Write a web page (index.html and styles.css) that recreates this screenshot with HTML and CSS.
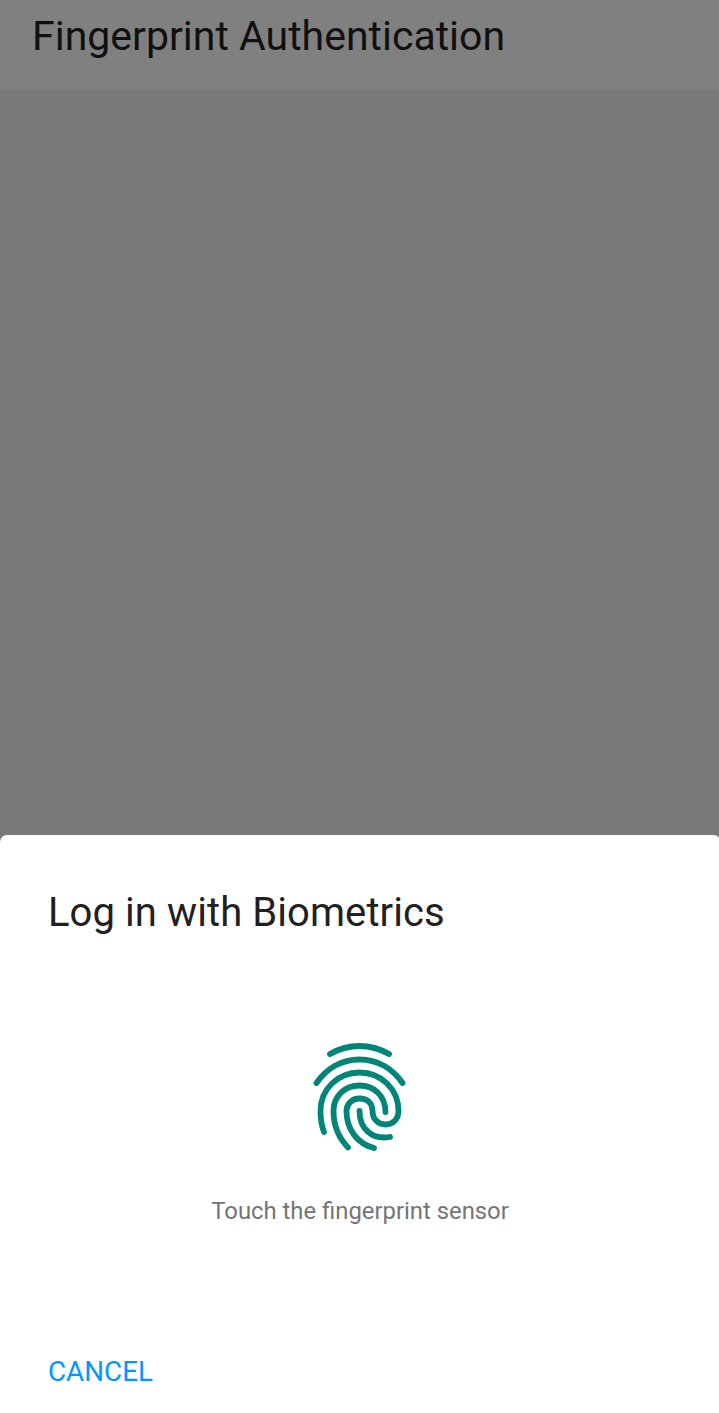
FILE: index.html
```html
<!DOCTYPE html>
<html lang="en">
<head>
<meta charset="utf-8">
<title>Fingerprint Authentication</title>
<link rel="stylesheet" href="styles.css">
</head>
<body>
<div class="screen">
  <header class="app-bar"><h1 class="app-title">Fingerprint Authentication</h1></header>
  <main class="backdrop"></main>
  <section class="sheet" role="dialog" aria-labelledby="sheet-title">
    <h2 class="sheet-title" id="sheet-title">Log in with Biometrics</h2>
    <div class="prompt">
      <svg class="fingerprint" viewBox="300 1030 120 135" aria-hidden="true">
        <path d="M330 1054Q344 1046 359.500 1046T389 1054"/>
        <path d="M316.500 1083C326 1069 341 1059.500 359.500 1059.500S393 1069 402.500 1083"/>
        <path d="M324 1132C321 1124 320.500 1118 320.500 1111C320.500 1089 338 1072.500 359.500 1072.500S398.500 1089 398.500 1111C398.500 1119 393 1124.500 385.500 1124.500S372.500 1119 372.500 1111S367 1098.500 359.500 1098.500S346.500 1104 346.500 1111C346.500 1130 358 1144 374 1148"/>
        <path d="M348 1147.500C338 1137 333.500 1126 333.500 1111C333.500 1096 345 1085.500 359.500 1085.500S385.500 1096 385.500 1112"/>
        <path d="M359.500 1111C359.500 1128 371 1140 390 1137"/>
      </svg>
      <p class="hint">Touch the fingerprint sensor</p>
    </div>
    <button class="cancel" type="button">CANCEL</button>
  </section>
</div>
</body>
</html>
```
FILE: styles.css
```css
* { box-sizing: border-box; }
body { margin: 0; font-family: Roboto, "Liberation Sans", sans-serif; }
h1, h2, p { margin: 0; font-weight: 400; }
.screen { height: 1413px; display: flex; flex-direction: column; background: #797979; }
.app-bar { height: 90px; padding: 12px 32px 0; background: #808080; }
.app-title { font-size: 41px; line-height: 48px; color: #101010; white-space: nowrap; }
.backdrop { flex: 1; }
.sheet { height: 578px; padding: 54px 48px 0; background: #fff; border-radius: 7px 6px 0 0 / 7px 3px 0 0; display: flex; flex-direction: column; align-items: flex-start; }
.sheet-title { font-size: 40px; line-height: 48px; letter-spacing: 0.08px; color: #212121; white-space: nowrap; }
.prompt { align-self: stretch; margin-top: 93px; display: flex; flex-direction: column; align-items: center; }
.fingerprint { width: 120px; height: 135px; fill: none; stroke: #008577; stroke-width: 5.8; stroke-linecap: round; }
.hint { margin-top: 32px; padding-left: 1px; font-size: 23.85px; line-height: 28px; color: #757575; white-space: nowrap; }
.cancel { margin-top: 130px; padding: 0; border: 0; background: none; font: 27.8px/34px Roboto, "Liberation Sans", sans-serif; color: #0795ff; }
```
